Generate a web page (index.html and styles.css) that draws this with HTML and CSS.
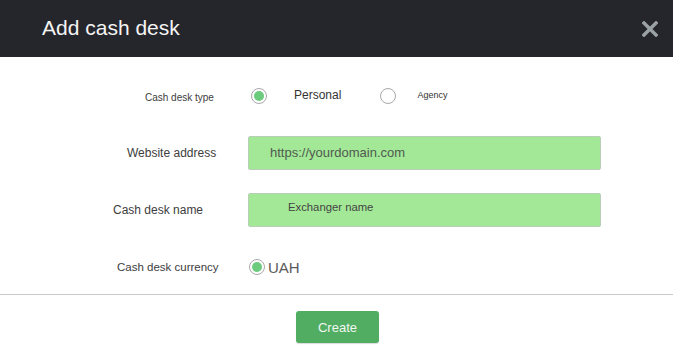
FILE: index.html
```html
<!DOCTYPE html>
<html>
<head>
<meta charset="utf-8">
<link rel="stylesheet" href="styles.css">
</head>
<body>
<div class="modal">
  <header class="modal-header">
    <h1 class="modal-title">Add cash desk</h1>
    <button class="close" aria-label="Close">
      <svg width="16" height="16" viewBox="0 0 16 16"><path d="M2 2 L14 14 M14 2 L2 14" stroke="#9ba2a3" stroke-width="3.4" stroke-linecap="square" fill="none"/></svg>
    </button>
  </header>
  <div class="modal-body">
    <div class="row">
      <label class="label label-type">Cash desk type</label>
      <div class="control control-type">
        <span class="radio checked"></span>
        <span class="opt-personal">Personal</span>
        <span class="radio radio-agency"></span>
        <span class="opt-agency">Agency</span>
      </div>
    </div>
    <div class="row">
      <label class="label label-site">Website address</label>
      <div class="input input-site">https://yourdomain.com</div>
    </div>
    <div class="row">
      <label class="label label-name">Cash desk name</label>
      <div class="input input-name">Exchanger name</div>
    </div>
    <div class="row">
      <label class="label label-currency">Cash desk currency</label>
      <div class="control control-currency">
        <span class="radio checked"></span>
        <span class="opt-uah">UAH</span>
      </div>
    </div>
  </div>
  <footer class="modal-footer">
    <button class="btn-create">Create</button>
  </footer>
</div>
</body>
</html>
```

FILE: styles.css
```css
html, body {
  margin: 0;
  padding: 0;
  background: #fff;
  font-family: "Liberation Sans", Arial, sans-serif;
}
.modal {
  width: 673px;
  height: 361px;
  overflow: hidden;
}
.modal-header {
  height: 57px;
  background: #25262b;
  display: flex;
  align-items: center;
  justify-content: space-between;
  padding: 0 15px 0 42px;
  box-sizing: border-box;
}
.modal-title {
  margin: 0;
  font-weight: normal;
  font-size: 21px;
  color: #f4f4f4;
  padding-bottom: 2px;
}
.close {
  border: 0;
  background: none;
  padding: 0;
  width: 16px;
  height: 16px;
  margin-top: 1px;
  display: flex;
}
.modal-body {
  padding: 22px 0 10px;
  display: flex;
  flex-direction: column;
  gap: 23px;
}
.row {
  display: flex;
  align-items: center;
  height: 34px;
}
.label {
  width: 248px;
  box-sizing: border-box;
  color: #3d3d3d;
  font-size: 12px;
}
.label-type { padding-left: 145px; font-size: 10px; padding-top: 2px; }
.label-site { padding-left: 127px; }
.label-name { padding-left: 113px; }
.label-currency { padding-left: 117px; font-size: 11.5px; }
.control {
  display: flex;
  align-items: center;
}
.radio {
  width: 16px;
  height: 16px;
  box-sizing: border-box;
  border: 1px solid #a9a9a9;
  border-radius: 50%;
  background: #fff;
  display: flex;
  align-items: center;
  justify-content: center;
}
.radio.checked::after {
  content: "";
  width: 10px;
  height: 10px;
  border-radius: 50%;
  background: #6ccb7d;
}
.control-type .radio.checked { margin-left: 3px; }
.opt-personal {
  margin-left: 27px;
  font-size: 12px;
  color: #333;
  margin-top: -2px;
}
.radio-agency { margin-left: 39px; }
.opt-agency {
  margin-left: 21px;
  font-size: 9px;
  color: #333;
  margin-top: -3px;
}
.control-currency .radio { margin-left: 1px; }
.opt-uah {
  margin-left: 3px;
  font-size: 15px;
  color: #5a5a5a;
}
.input {
  width: 353px;
  height: 34px;
  box-sizing: border-box;
  background: #a3e897;
  border: 1px solid #b9ceb6;
  border-radius: 2px;
  display: flex;
  align-items: center;
  color: #505a50;
}
.input-site { padding-left: 21px; font-size: 13px; margin-top: -1px; padding-bottom: 1px; }
.input-name { padding-left: 39px; font-size: 11.3px; color: #444; padding-bottom: 6px; }
.modal-footer {
  border-top: 1px solid #c9c9c9;
  display: flex;
  justify-content: center;
  padding-top: 16px;
}
.btn-create {
  width: 83px;
  height: 32px;
  margin-left: 2px;
  border: 0;
  border-radius: 3px;
  background: #50ad62;
  color: #f2f7f2;
  font-family: "Liberation Sans", Arial, sans-serif;
  font-size: 13px;
  box-shadow: 0 1px 1px rgba(0,0,0,0.15);
  padding: 0;
}
```
